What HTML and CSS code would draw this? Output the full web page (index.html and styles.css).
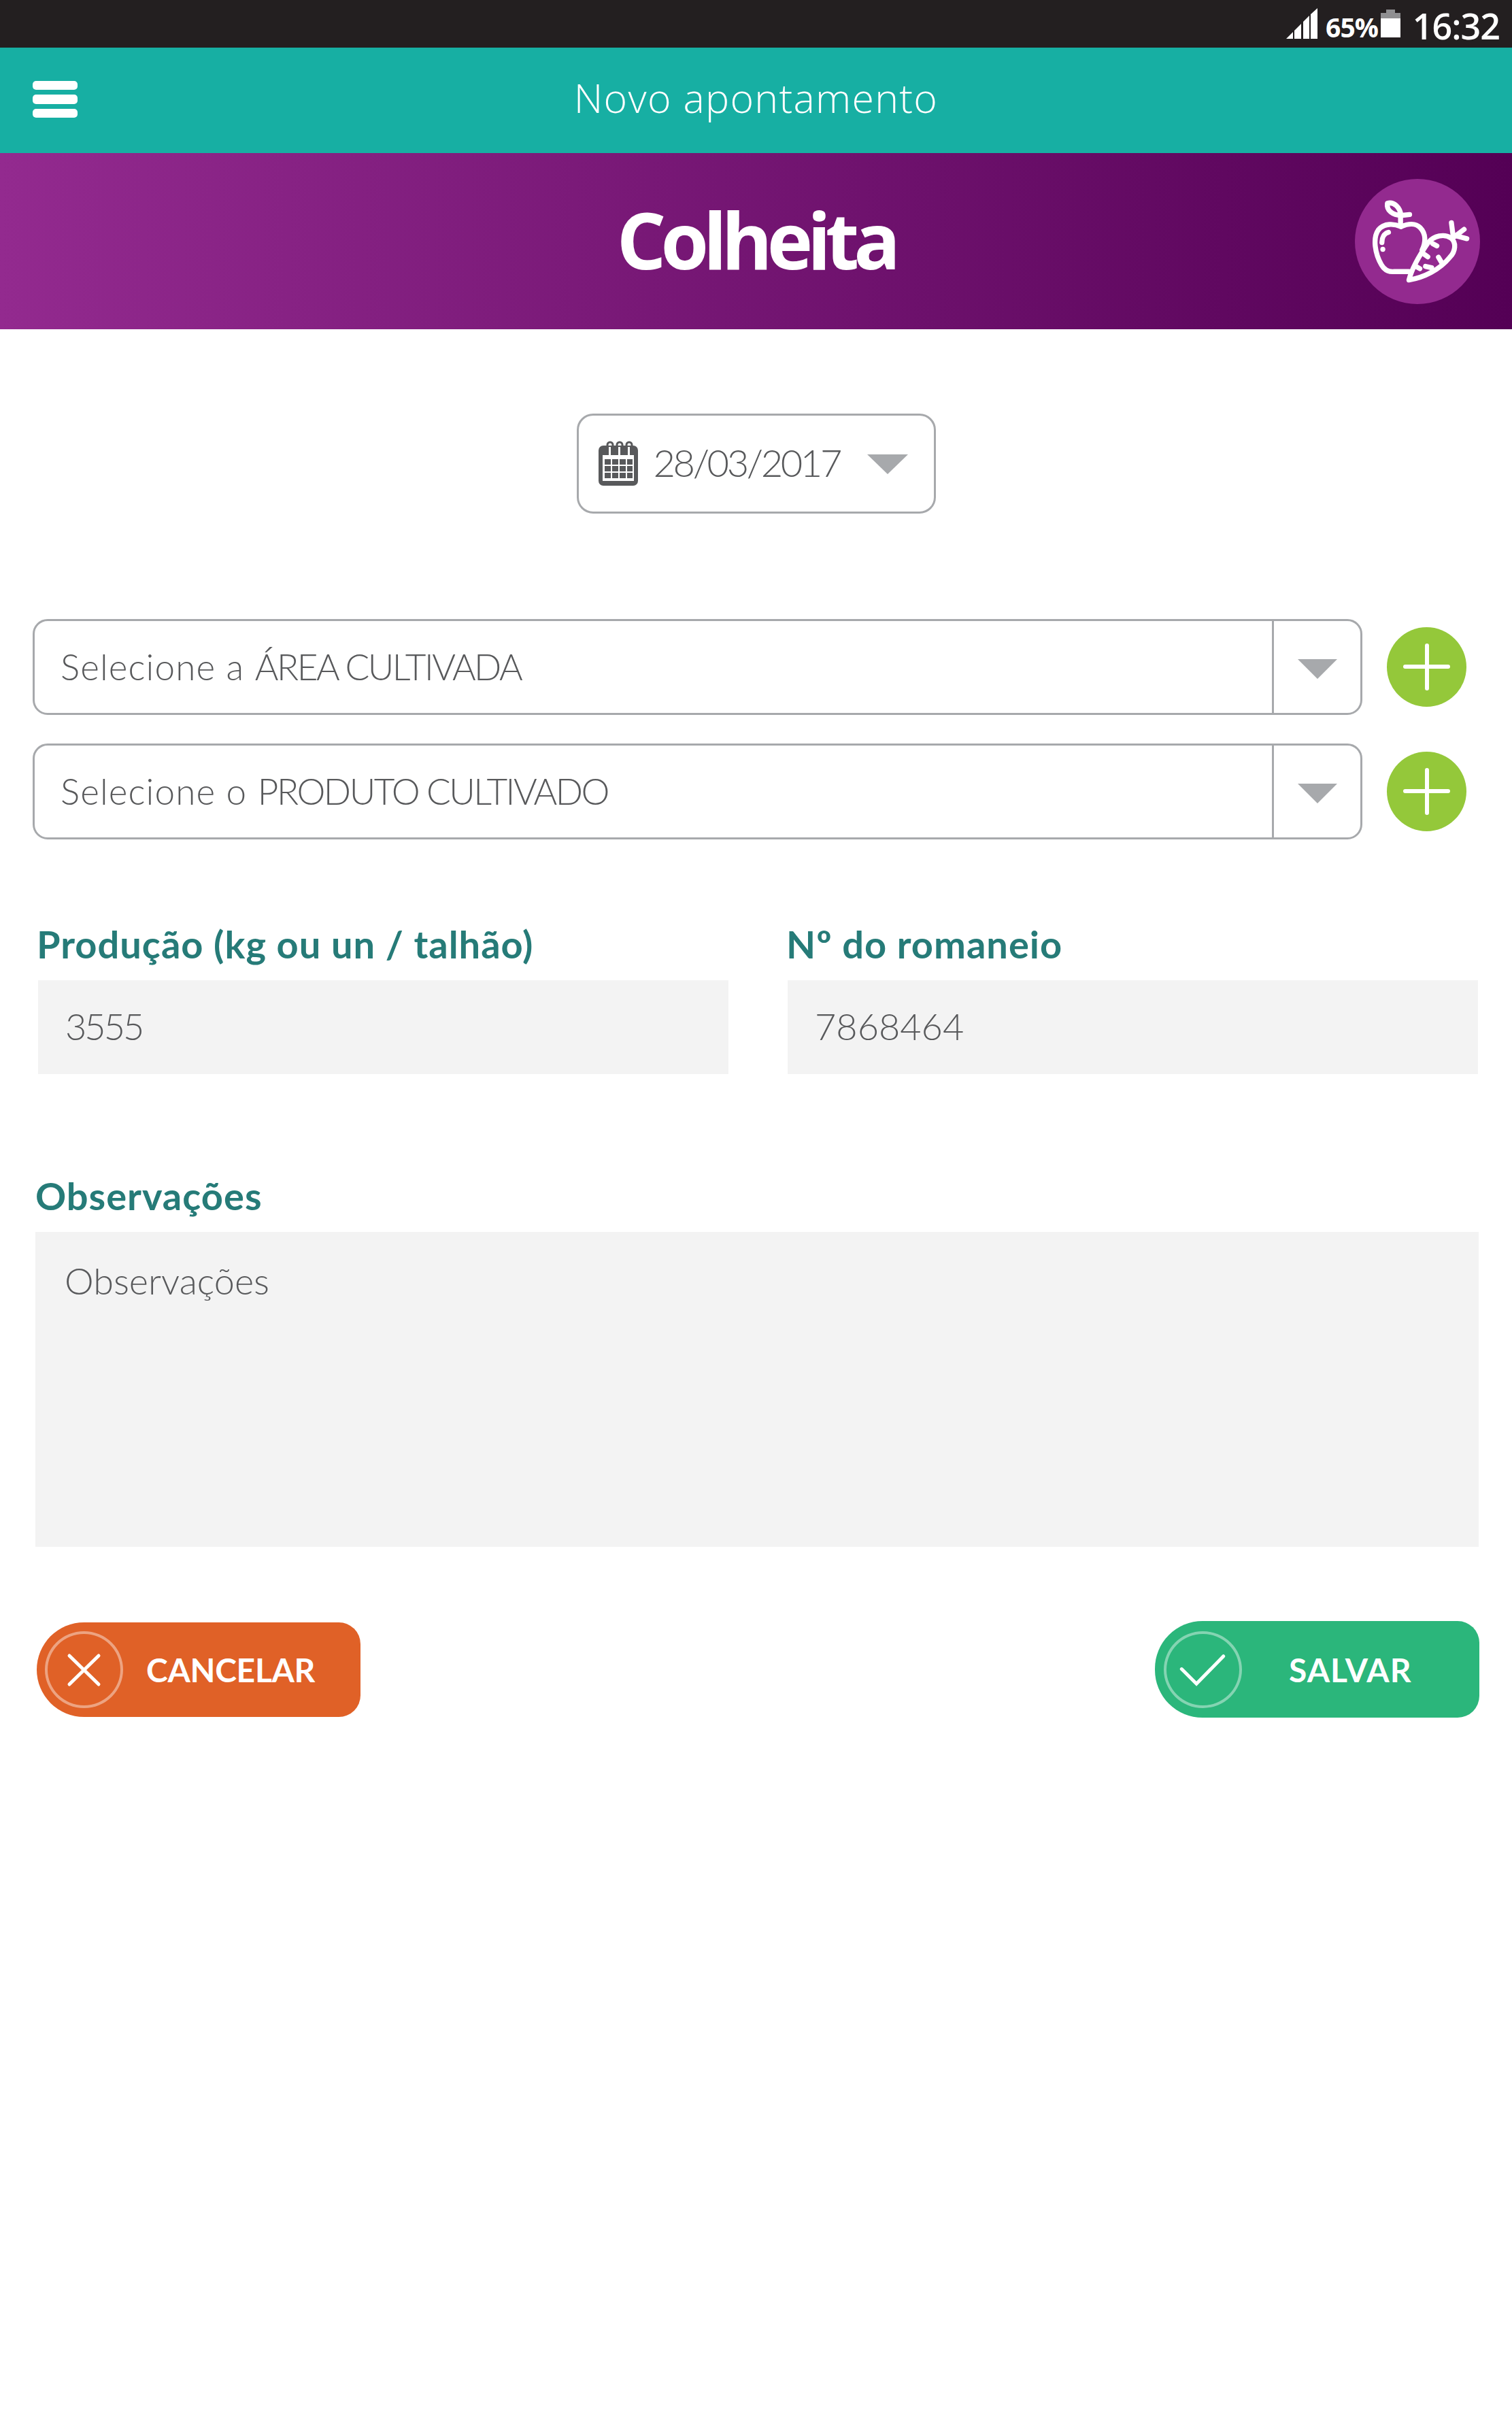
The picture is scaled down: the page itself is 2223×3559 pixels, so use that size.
FILE: index.html
```html
<!DOCTYPE html>
<html lang="pt-BR">
<head>
<meta charset="utf-8">
<title>Colheita</title>
<link rel="stylesheet" href="styles.css">
</head>
<body>
<div class="page">
  <div class="statusbar">
    <svg class="signal" viewBox="0 0 46 45"><polygon points="0,45 10,35 10,45"/><polygon points="12,33 22,23 22,45 12,45"/><polygon points="25,20 34,11 34,45 25,45"/><polygon points="36,9 46,0 46,45 36,45"/></svg>
    <span class="pct">65%</span>
    <svg class="battery" viewBox="0 0 29 41"><rect x="8" y="0" width="13" height="6" fill="#8f8f91"/><rect x="0" y="5" width="29" height="9" fill="#8f8f91"/><rect x="0" y="13" width="29" height="28" fill="#fff"/></svg>
    <span class="clock">16:32</span>
  </div>
  <header class="topbar">
    <div class="burger"><i></i><i></i><i></i></div>
    <div class="topbar-title">Novo apontamento</div>
    <div></div>
  </header>
  <div class="banner">
    <div></div>
    <h1 class="banner-title">Colheita</h1>
    <div class="banner-end">
      <svg class="crop-icon" viewBox="97 65 551 551">
        <circle cx="372.5" cy="340.5" r="275.5" fill="#932a8f"/>
        <g fill="none" stroke="#fff" stroke-width="22" stroke-linecap="round" stroke-linejoin="round">
          <path d="M300 275C270 262 225 258 200 290C175 325 185 395 215 445C230 470 250 475 270 473L335 473"/>
          <path d="M300 275C330 262 365 258 385 280C410 305 410 345 393 378"/>
          <path d="M245 300C225 305 216 325 216 345"/>
          <path d="M298 270L298 232"/>
          <path d="M240 172C270 165 295 190 300 225C265 225 235 205 240 172Z"/>
          <path d="M300 226L338 222"/>
          <path d="M335 510C345 470 375 410 420 345C445 315 490 305 520 325C545 345 540 385 515 410C470 465 400 500 335 510Z"/>
          <path d="M440 350L458 360M400 395L418 408M365 450L383 460M408 450L435 456M465 410L480 435"/>
          <path d="M530 320L522 258M535 320L578 287M540 315L590 328"/>
        </g>
        <circle cx="220" cy="375" r="11" fill="#fff"/>
      </svg>
    </div>
  </div>
  <main class="form">
    <div class="date-row">
      <div class="date-box">
        <svg class="calendar" viewBox="0 0 58 66">
          <rect x="0" y="7" width="58" height="59" rx="7" fill="#58595b"/>
          <rect x="6" y="21" width="46" height="38" fill="#fff"/>
          <g fill="none" stroke="#58595b" stroke-width="3"><path d="M13 16V6a4 4 0 0 1 8 0V16M27 16V6a4 4 0 0 1 8 0V16M41 16V6a4 4 0 0 1 8 0V16"/></g>
          <g fill="#fff"><rect x="15" y="9" width="3" height="12"/><rect x="29" y="9" width="3" height="12"/><rect x="43" y="9" width="3" height="12"/></g>
          <g fill="#58595b">
            <rect x="9" y="27" width="9" height="8"/><rect x="20" y="27" width="9" height="8"/><rect x="31" y="27" width="9" height="8"/><rect x="42" y="27" width="8" height="8"/>
            <rect x="9" y="37" width="9" height="8"/><rect x="20" y="37" width="9" height="8"/><rect x="31" y="37" width="9" height="8"/><rect x="42" y="37" width="8" height="8"/>
            <rect x="9" y="47" width="9" height="8"/><rect x="20" y="47" width="9" height="8"/><rect x="31" y="47" width="9" height="8"/><rect x="42" y="47" width="8" height="8"/>
          </g>
        </svg>
        <span class="date-text">28/03/2017</span>
        <span class="caret caret-date"></span>
      </div>
    </div>

    <div class="selects">
      <div class="select-row">
        <div class="select">
          <div class="select-text"><span>Selecione a <span class="caps">ÁREA CULTIVADA</span></span></div>
          <div class="select-arrow"><span class="caret"></span></div>
        </div>
        <div class="plus"></div>
      </div>
      <div class="select-row">
        <div class="select">
          <div class="select-text"><span>Selecione o <span class="caps">PRODUTO CULTIVADO</span></span></div>
          <div class="select-arrow"><span class="caret"></span></div>
        </div>
        <div class="plus"></div>
      </div>
    </div>

    <div class="fields">
      <div class="field">
        <label class="label">Produção (kg ou un / talhão)</label>
        <div class="input input-tight">3555</div>
      </div>
      <div class="field">
        <label class="label">Nº do romaneio</label>
        <div class="input">7868464</div>
      </div>
    </div>

    <div class="notes">
      <label class="label">Observações</label>
      <div class="textarea">Observações</div>
    </div>

    <div class="actions">
      <div class="btn btn-cancel">
        <span class="btn-ring">
          <svg class="btn-glyph" viewBox="0 0 115 113"><path d="M36 36L79 78M79 36L36 78" fill="none" stroke="#fff" stroke-width="5" stroke-linecap="round"/></svg>
        </span>
        <span class="btn-label">CANCELAR</span>
      </div>
      <div class="btn btn-save">
        <span class="btn-ring">
          <svg class="btn-glyph" viewBox="0 0 115 114"><path d="M26 56L48 78L88 37" fill="none" stroke="#fff" stroke-width="5" stroke-linecap="round"/></svg>
        </span>
        <span class="btn-label">SALVAR</span>
      </div>
    </div>
  </main>
</div>
</body>
</html>
```
FILE: styles.css
```css
* { box-sizing: border-box; }
html, body { margin: 0; padding: 0; background: #fff; }
.page {
  width: 2223px;
  min-height: 3559px;
  font-family: "Lato", "Open Sans", sans-serif;
  color: #58595b;
}

/* status bar */
.statusbar {
  height: 70px;
  background: #231f20;
  display: flex;
  justify-content: flex-end;
  align-items: center;
  padding-right: 18px;
  color: #fff;
  font-family: "Open Sans", sans-serif;
}
.signal { width: 46px; height: 45px; fill: #fff; margin-right: 12px; margin-top: -1px; }
.pct { font-size: 39px; font-weight: 700; letter-spacing: -1px; margin-right: 4px; line-height: 1; margin-top: 8px; }
.battery { width: 29px; height: 41px; margin-right: 18px; margin-top: -1px; }
.clock { font-size: 52px; font-weight: 600; line-height: 1; letter-spacing: -1px; margin-top: 6px; }

/* teal bar */
.topbar {
  height: 155px;
  background: #17afa3;
  display: grid;
  grid-template-columns: 1fr auto 1fr;
  align-items: center;
}
.burger { display: flex; flex-direction: column; gap: 7px; width: 66px; margin: -3px 0 0 48px; }
.burger i { display: block; height: 13.5px; background: #fff; border-radius: 5px; }
.topbar-title { color: #fff; font-size: 59px; font-weight: 300; font-family: "Open Sans", sans-serif; letter-spacing: 1.3px; margin-top: -10px; }

/* purple banner */
.banner {
  height: 259px;
  background: linear-gradient(90deg, #932a8f 0%, #540055 100%);
  display: grid;
  grid-template-columns: 1fr auto 1fr;
  align-items: center;
}
.banner-title { margin: -5px 0 0; color: #fff; font-size: 114px; font-weight: 700; line-height: 1; font-family: "Open Sans", sans-serif; letter-spacing: -8px; }
.banner-end { display: flex; justify-content: flex-end; padding-right: 47px; }
.crop-icon { width: 184px; height: 184px; display: block; }

/* form */
.form { display: flex; flex-direction: column; }
.date-row { display: flex; justify-content: center; margin-top: 124px; }
.date-box {
  width: 528px;
  height: 147px;
  border: 3px solid #a7a9ac;
  border-radius: 24px;
  display: flex;
  align-items: center;
  padding-left: 29px;
}
.calendar { width: 58px; height: 66px; margin-right: 23px; margin-top: -2px; }
.date-text { font-size: 56px; font-weight: 300; line-height: 1; letter-spacing: -3.4px; margin-top: -3px; }
.caret {
  display: block;
  width: 0;
  height: 0;
  border-left: 29px solid transparent;
  border-right: 29px solid transparent;
  border-top: 29px solid #a7a9ac;
}
.caret-date { margin: 2px 0 0 40px; border-left-width: 30px; border-right-width: 30px; }

.selects { display: flex; flex-direction: column; gap: 42px; margin-top: 155px; padding-left: 48px; }
.select-row { display: flex; align-items: center; gap: 36px; }
.select {
  width: 1955px;
  height: 141px;
  border: 3px solid #a7a9ac;
  border-radius: 22px;
  display: flex;
  align-items: stretch;
}
.select-text { flex: 1; display: flex; align-items: center; padding: 0 0 2px 38px; font-size: 53px; font-weight: 300; letter-spacing: 1.1px; }
.caps { letter-spacing: -2.5px; }
.select-arrow { width: 130px; border-left: 3px solid #a7a9ac; display: flex; align-items: center; justify-content: center; padding-top: 6px; }
.plus {
  position: relative;
  width: 117px;
  height: 117px;
  border-radius: 50%;
  background: #94c83a;
}
.plus::before, .plus::after { content: ""; position: absolute; background: #fff; border-radius: 3px; }
.plus::before { left: 24px; right: 24px; top: 55px; height: 6px; }
.plus::after { top: 24px; bottom: 24px; left: 56px; width: 6px; }

.fields {
  display: grid;
  grid-template-columns: 1015px 1015px;
  column-gap: 87px;
  padding-left: 56px;
  margin-top: 129px;
}
.field { display: flex; flex-direction: column; }
.label { color: #267b78; font-size: 56px; font-weight: 700; line-height: 50px; height: 78px; display: block; letter-spacing: 1px; }
.field .label { margin-left: -2px; }
.input {
  height: 138px;
  background: #f3f3f3;
  padding: 0 0 3px 40px;
  display: flex;
  align-items: center;
  font-size: 54px;
  font-weight: 300;
}
.input-tight { letter-spacing: -3px; }
.notes { margin: 154px 49px 0 52px; }
.textarea {
  height: 463px;
  background: #f3f3f3;
  padding: 36px 0 0 43px;
  font-size: 54px;
  font-weight: 300;
  line-height: 72px;
}

.actions {
  display: flex;
  justify-content: space-between;
  align-items: center;
  padding: 0 48px 0 54px;
  margin-top: 109px;
}
.btn {
  display: flex;
  align-items: center;
  color: #fff;
  border-radius: 70px 32px 32px 70px;
}
.btn-cancel { width: 476px; height: 139px; background: #e06127; padding-left: 12px; }
.btn-save { width: 477px; height: 142px; background: #2bb67b; padding-left: 13px; }
.btn-ring {
  display: block;
  width: 115px;
  height: 113px;
  border-radius: 50%;
  border: 4px solid rgba(255, 255, 255, .42);
  position: relative;
  flex: none;
}
.btn-glyph { position: absolute; left: -4px; top: -4px; width: 115px; height: 113px; }
.btn-label { font-size: 48px; font-weight: 700; line-height: 1; margin-top: 2px; }
.btn-cancel .btn-label { margin-left: 34px; letter-spacing: -0.3px; }
.btn-save .btn-label { margin-left: 69px; letter-spacing: 1px; }
```
